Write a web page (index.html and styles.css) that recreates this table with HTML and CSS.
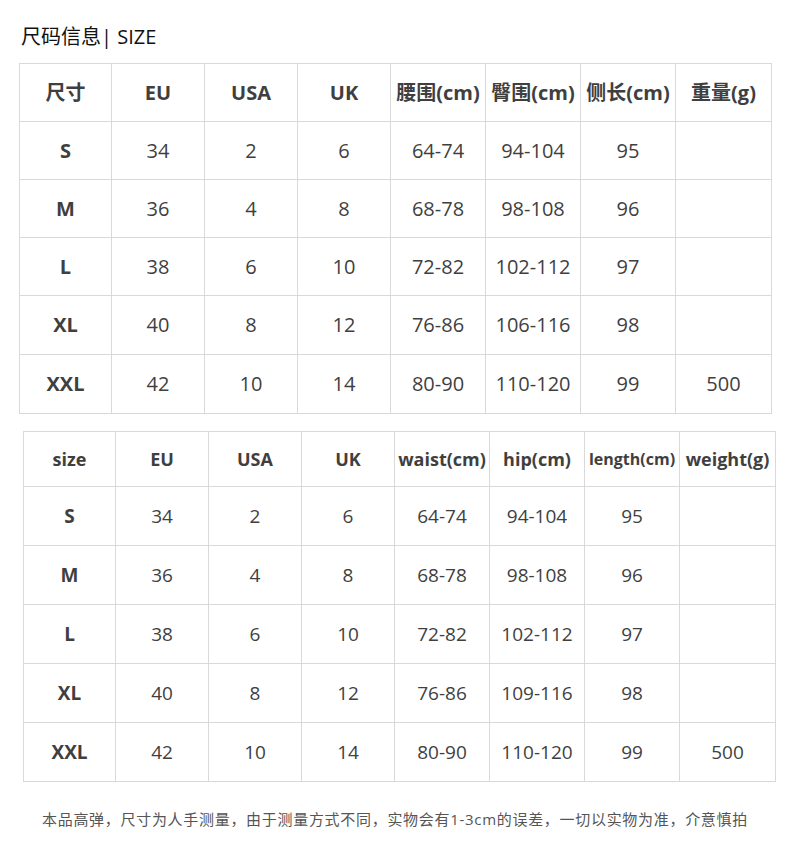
FILE: index.html
```html
<!DOCTYPE html>
<html lang="zh-CN">
<head>
<meta charset="utf-8">
<title>尺码信息 | SIZE</title>
<link rel="stylesheet" href="styles.css">
</head>
<body>
<div class="page">
  <h1 class="title">尺码信息| SIZE</h1>

  <table class="size-table t1">
    <colgroup>
      <col class="c1"><col class="c2"><col class="c3"><col class="c4">
      <col class="c5"><col class="c6"><col class="c7"><col class="c8">
    </colgroup>
    <thead>
      <tr><th>尺寸</th><th>EU</th><th>USA</th><th>UK</th><th>腰围(cm)</th><th>臀围(cm)</th><th>侧长(cm)</th><th>重量(g)</th></tr>
    </thead>
    <tbody>
      <tr><th>S</th><td>34</td><td>2</td><td>6</td><td>64-74</td><td>94-104</td><td>95</td><td></td></tr>
      <tr><th>M</th><td>36</td><td>4</td><td>8</td><td>68-78</td><td>98-108</td><td>96</td><td></td></tr>
      <tr><th>L</th><td>38</td><td>6</td><td>10</td><td>72-82</td><td>102-112</td><td>97</td><td></td></tr>
      <tr class="tall"><th>XL</th><td>40</td><td>8</td><td>12</td><td>76-86</td><td>106-116</td><td>98</td><td></td></tr>
      <tr class="tall"><th>XXL</th><td>42</td><td>10</td><td>14</td><td>80-90</td><td>110-120</td><td>99</td><td>500</td></tr>
    </tbody>
  </table>

  <table class="size-table t2">
    <colgroup>
      <col class="c1"><col class="c2"><col class="c3"><col class="c4">
      <col class="c5"><col class="c6"><col class="c7"><col class="c8">
    </colgroup>
    <thead>
      <tr><th>size</th><th>EU</th><th>USA</th><th>UK</th><th>waist(cm)</th><th>hip(cm)</th><th class="small">length(cm)</th><th>weight(g)</th></tr>
    </thead>
    <tbody>
      <tr><th>S</th><td>34</td><td>2</td><td>6</td><td>64-74</td><td>94-104</td><td>95</td><td></td></tr>
      <tr><th>M</th><td>36</td><td>4</td><td>8</td><td>68-78</td><td>98-108</td><td>96</td><td></td></tr>
      <tr><th>L</th><td>38</td><td>6</td><td>10</td><td>72-82</td><td>102-112</td><td>97</td><td></td></tr>
      <tr><th>XL</th><td>40</td><td>8</td><td>12</td><td>76-86</td><td>109-116</td><td>98</td><td></td></tr>
      <tr><th>XXL</th><td>42</td><td>10</td><td>14</td><td>80-90</td><td>110-120</td><td>99</td><td>500</td></tr>
    </tbody>
  </table>

  <p class="note">本品高弹，尺寸为人手测量，由于测量方式不同，实物会有1-3cm的误差，一切以实物为准，介意慎拍</p>
</div>
</body>
</html>
```

FILE: styles.css
```css
html, body {
  margin: 0;
  padding: 0;
  background: #ffffff;
}

body {
  font-family: "Open Sans", "Noto Sans CJK SC", sans-serif;
  color: #3f3f3f;
}

.page {
  width: 790px;
  padding-top: 24px;
}

.title {
  margin: 0 0 13px 21px;
  font-size: 20px;
  line-height: 26px;
  font-weight: 400;
  color: #111111;
}

.size-table {
  border-collapse: collapse;
  table-layout: fixed;
  width: 752px;
}

.size-table th,
.size-table td {
  border: 1px solid #d9d9d9;
  padding: 0;
  text-align: center;
  vertical-align: middle;
  white-space: nowrap;
  line-height: 24px;
}

.size-table th {
  font-weight: 700;
}

.c1 { width: 92px; }
.c2 { width: 93px; }
.c3 { width: 93px; }
.c4 { width: 93px; }
.c5 { width: 95px; }
.c6 { width: 95px; }
.c7 { width: 95px; }
.c8 { width: 96px; }

.t1 {
  margin-left: 19px;
  font-size: 20px;
}

.t1 tr {
  height: 58px;
}

.t1 tr.tall {
  height: 59px;
}

.t2 {
  margin-left: 23px;
  margin-top: 17px;
  font-size: 19px;
}

.t2 thead th {
  font-size: 18px;
}

.t2 thead th.small {
  font-size: 16px;
}

.t2 thead tr {
  height: 55px;
}

.t2 tbody tr {
  height: 59px;
}

.note {
  margin: 25px 0 0 0;
  text-align: center;
  font-size: 15px;
  letter-spacing: 0.7px;
  line-height: 24px;
  color: #555555;
}
```
